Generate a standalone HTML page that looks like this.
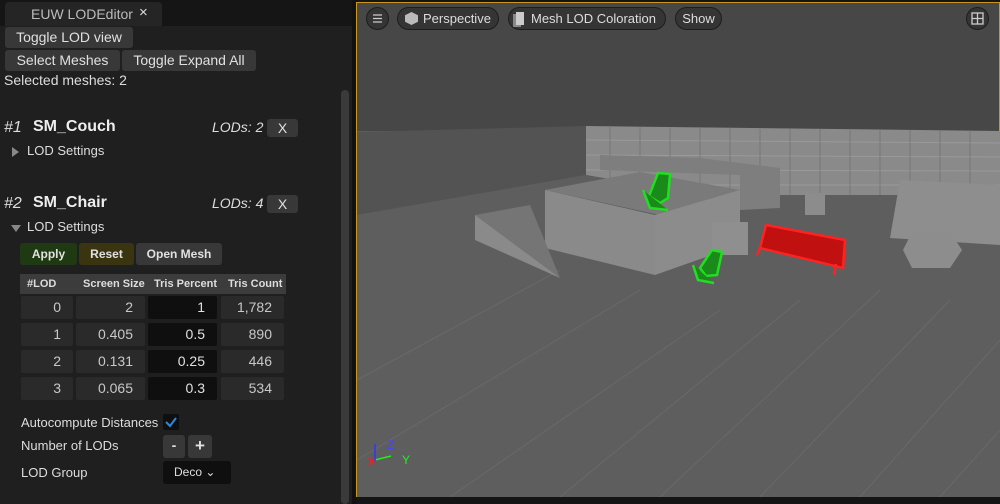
<!DOCTYPE html>
<html><head><style>
*{margin:0;padding:0;box-sizing:border-box}
body{width:1000px;height:504px;background:#151515;font-family:"Liberation Sans",sans-serif;color:#ddd;position:relative;overflow:hidden;font-size:13px}
.a{position:absolute}
.btn{position:absolute;background:#383838;border-radius:3px;color:#e0e0e0;font-size:14px;text-align:center;line-height:21px;white-space:nowrap}
.cell{position:absolute;background:#2a2a2a;border-radius:2px;text-align:right;padding-right:12px;font-size:14px;line-height:23px;color:#c8c8c8}
.dk{background:#0f0f0f;color:#e0e0e0}
.h{position:absolute;font-size:11px;font-weight:bold;color:#ddd;top:278px}
.pill{position:absolute;top:7px;height:23px;border:1px solid #1d1d1d;background:#353535;border-radius:12px;color:#ddd;font-size:13px;line-height:21px;white-space:nowrap;overflow:hidden}
</style></head><body>
<div class="a" style="left:0;top:0;width:352px;height:504px;background:#1f1f1f"></div>
<div class="a" style="left:0;top:0;width:352px;height:26px;background:#151515"></div>
<div class="a" style="left:5px;top:2px;width:157px;height:24px;background:#252525;border-radius:4px 4px 0 0"></div>
<div class="a" style="left:31px;top:6px;font-size:14px;color:#bbb">EUW LODEditor</div>
<div class="a" style="left:139px;top:4px;font-size:15px;color:#ddd">×</div>
<div class="btn" style="left:5px;top:27px;width:128px">Toggle LOD view</div>
<div class="btn" style="left:5px;top:50px;width:115px">Select Meshes</div>
<div class="btn" style="left:122px;top:50px;width:134px">Toggle Expand All</div>
<div class="a" style="left:4px;top:72px;font-size:14px;color:#ddd">Selected meshes: 2</div>
<div class="a" style="left:341px;top:90px;width:8px;height:414px;background:#3a3a3a;border-radius:4px"></div>

<div class="a" style="left:4px;top:119px;font-size:16px;font-style:italic;color:#ddd">#1</div>
<div class="a" style="left:33px;top:118px;font-size:16px;font-weight:bold;color:#eee">SM_Couch</div>
<div class="a" style="left:212px;top:119px;font-size:14px;font-style:italic">LODs: 2</div>
<div class="btn" style="left:267px;top:119px;width:31px;height:18px;line-height:18px;font-size:14px">X</div>
<div class="a" style="left:12px;top:147px;width:0;height:0;border-top:5px solid transparent;border-bottom:5px solid transparent;border-left:7px solid #888"></div>
<div class="a" style="left:27px;top:143px;font-size:13px">LOD Settings</div>

<div class="a" style="left:4px;top:195px;font-size:16px;font-style:italic;color:#ddd">#2</div>
<div class="a" style="left:33px;top:194px;font-size:16px;font-weight:bold;color:#eee">SM_Chair</div>
<div class="a" style="left:212px;top:195px;font-size:14px;font-style:italic">LODs: 4</div>
<div class="btn" style="left:267px;top:195px;width:31px;height:18px;line-height:18px;font-size:14px">X</div>
<div class="a" style="left:11px;top:225px;width:0;height:0;border-left:5px solid transparent;border-right:5px solid transparent;border-top:7px solid #888"></div>
<div class="a" style="left:27px;top:219px;font-size:13px">LOD Settings</div>

<div class="btn" style="left:20px;top:243px;width:57px;height:22px;background:#1f3a12;font-weight:bold;font-size:12px;line-height:22px">Apply</div>
<div class="btn" style="left:79px;top:243px;width:55px;height:22px;background:#3a3510;font-weight:bold;font-size:12px;line-height:22px">Reset</div>
<div class="btn" style="left:136px;top:243px;width:86px;height:22px;font-weight:bold;font-size:12px;line-height:22px">Open Mesh</div>

<div class="a" style="left:20px;top:274px;width:266px;height:20px;background:#3c3c3c"></div>
<div class="h" style="left:27px">#LOD</div>
<div class="h" style="left:83px">Screen Size</div>
<div class="h" style="left:154px">Tris Percent</div>
<div class="h" style="left:228px">Tris Count</div>

<div class="cell" style="left:21px;top:296px;width:52px">0</div><div class="cell" style="left:76px;top:296px;width:69px">2</div><div class="cell dk" style="left:148px;top:296px;width:69px">1</div><div class="cell" style="left:221px;top:296px;width:63px">1,782</div>
<div class="cell" style="left:21px;top:323px;width:52px">1</div><div class="cell" style="left:76px;top:323px;width:69px">0.405</div><div class="cell dk" style="left:148px;top:323px;width:69px">0.5</div><div class="cell" style="left:221px;top:323px;width:63px">890</div>
<div class="cell" style="left:21px;top:350px;width:52px">2</div><div class="cell" style="left:76px;top:350px;width:69px">0.131</div><div class="cell dk" style="left:148px;top:350px;width:69px">0.25</div><div class="cell" style="left:221px;top:350px;width:63px">446</div>
<div class="cell" style="left:21px;top:377px;width:52px">3</div><div class="cell" style="left:76px;top:377px;width:69px">0.065</div><div class="cell dk" style="left:148px;top:377px;width:69px">0.3</div><div class="cell" style="left:221px;top:377px;width:63px">534</div>

<div class="a" style="left:21px;top:415px;font-size:13px">Autocompute Distances</div>
<div class="a" style="left:163px;top:414px;width:16px;height:16px;background:#0f0f0f;border-radius:2px"><svg width="16" height="16"><path d="M3 8 L7 12 L13 4" stroke="#2a8ae0" stroke-width="2" fill="none"/></svg></div>
<div class="a" style="left:21px;top:438px;font-size:13px">Number of LODs</div>
<div class="btn" style="left:163px;top:435px;width:22px;height:23px;font-weight:bold">-</div>
<div class="btn" style="left:188px;top:435px;width:24px;height:23px;font-weight:bold;font-size:17px">+</div>
<div class="a" style="left:21px;top:465px;font-size:13px">LOD Group</div>
<div class="a" style="left:163px;top:461px;width:68px;height:23px;background:#0f0f0f;border-radius:3px;font-size:12px;line-height:23px;padding-left:11px;color:#ddd">Deco &#8964;</div>

<div class="a" style="left:352px;top:0;width:5px;height:504px;background:#111"></div>
<svg class="a" style="left:356px;top:2px" width="644" height="495" viewBox="356 2 644 495">
<rect x="356" y="2" width="644" height="495" fill="#c9961e"/>
<rect x="357" y="3" width="642" height="492" fill="#5f5f5f"/>
<rect x="357" y="3" width="642" height="128" fill="#474747"/>
<polygon points="357,132 586,126 586,175 357,215" fill="#535353"/>
<polygon points="586,126 1000,131 1000,195 700,195 586,175" fill="#8a8a8a"/>
<g stroke="#9a9a9a" stroke-width="1">
<line x1="586" y1="140" x2="1000" y2="143"/><line x1="586" y1="155" x2="1000" y2="157"/><line x1="586" y1="170" x2="1000" y2="171"/><line x1="700" y1="185" x2="1000" y2="185"/>
</g>
<g stroke="#6a6a6a" stroke-width="1" opacity=".6">
<line x1="610" y1="127" x2="610" y2="180"/><line x1="640" y1="127" x2="640" y2="180"/><line x1="670" y1="128" x2="670" y2="185"/><line x1="700" y1="128" x2="700" y2="195"/><line x1="730" y1="128" x2="730" y2="195"/><line x1="760" y1="129" x2="760" y2="195"/><line x1="790" y1="129" x2="790" y2="195"/><line x1="820" y1="129" x2="820" y2="195"/><line x1="850" y1="130" x2="850" y2="195"/><line x1="880" y1="130" x2="880" y2="195"/><line x1="910" y1="130" x2="910" y2="195"/><line x1="940" y1="130" x2="940" y2="195"/><line x1="970" y1="131" x2="970" y2="195"/>
</g>
<polygon points="357,215 586,175 700,195 1000,195 1000,497 357,497" fill="#5e5e5e"/>
<g stroke="#696969" stroke-width="1">
<line x1="357" y1="380" x2="560" y2="270"/><line x1="357" y1="460" x2="640" y2="290"/><line x1="450" y1="497" x2="720" y2="310"/><line x1="560" y1="497" x2="800" y2="300"/><line x1="660" y1="497" x2="880" y2="290"/><line x1="760" y1="497" x2="950" y2="300"/><line x1="860" y1="497" x2="1000" y2="340"/><line x1="940" y1="497" x2="1000" y2="430"/>
</g>
<polygon points="600,155 700,158 780,168 780,208 740,210 740,175 600,170" fill="#7e7e7e"/>
<polygon points="545,190 640,172 740,190 660,215" fill="#7a7a7a"/>
<polygon points="545,190 655,215 655,275 545,248" fill="#8a8a8a"/>
<polygon points="655,215 740,190 740,245 655,275" fill="#8c8c8c"/>
<polygon points="475,215 530,205 560,278" fill="#757575"/>
<polygon points="475,215 475,240 560,278" fill="#8a8a8a"/>
<polygon points="712,222 748,222 748,255 712,255" fill="#8f8f8f"/>
<polygon points="805,193 825,193 825,215 805,215" fill="#8c8c8c"/>
<polygon points="900,180 1000,185 1000,245 890,238" fill="#8e8e8e"/>
<polygon points="912,232 950,232 962,250 950,268 912,268 903,250" fill="#8d8d8d"/>
<g stroke="#22dd22" stroke-width="2.5" fill="#1a8a1a">
<path d="M658 173 L670 174 L668 198 L660 203 L649 196 Z"/><path d="M643 190 L650 208 L668 210"/>
<path d="M712 250 L722 252 L717 275 L706 276 L700 268 Z"/><path d="M693 265 L698 280 L714 283"/>
</g>
<g stroke="#ff2222" stroke-width="2.5" fill="#c01010">
<path d="M766 225 L845 240 L843 268 L760 248 Z"/><path d="M760 248 L757 255 M836 264 L834 275"/>
</g>
<line x1="375" y1="460" x2="391" y2="456" stroke="#2e2" stroke-width="1.5"/>
<line x1="375" y1="462" x2="375" y2="444" stroke="#33f" stroke-width="1.5"/>
<line x1="375" y1="462" x2="370" y2="460" stroke="#e22" stroke-width="1.5"/>
<text x="387" y="449" fill="#44f" font-size="12" font-family="Liberation Sans">Z</text>
<text x="402" y="464" fill="#2e2" font-size="12" font-family="Liberation Sans">Y</text>
<text x="367" y="466" fill="#e22" font-size="12" font-family="Liberation Sans">X</text>
</svg>
<div class="pill" style="left:366px;width:23px"><svg width="21" height="21"><path d="M6 7h9M6 10.5h9M6 14h9" stroke="#ccc" stroke-width="1.3"/></svg></div>
<div class="pill" style="left:397px;width:102px;padding-left:7px"><span style="display:inline-block;width:13px;height:13px;background:#bbb;vertical-align:-2px;margin-right:5px;clip-path:polygon(50% 0,100% 25%,100% 75%,50% 100%,0 75%,0 25%)"></span>Perspective</div>
<div class="pill" style="left:508px;width:158px;padding-left:7px"><span style="display:inline-block;width:8px;height:13px;background:#ccc;vertical-align:-2px;margin-right:7px;box-shadow:-3px 2px 0 #888"></span>Mesh LOD Coloration</div>
<div class="pill" style="left:675px;width:47px;text-align:center">Show</div>
<div class="pill" style="left:966px;width:23px"><svg width="21" height="21"><rect x="5" y="5" width="11" height="11" stroke="#ccc" fill="none" stroke-width="1.3"/><path d="M10.5 5v11M5 10.5h11" stroke="#ccc" stroke-width="1.3"/></svg></div>
</body></html>
